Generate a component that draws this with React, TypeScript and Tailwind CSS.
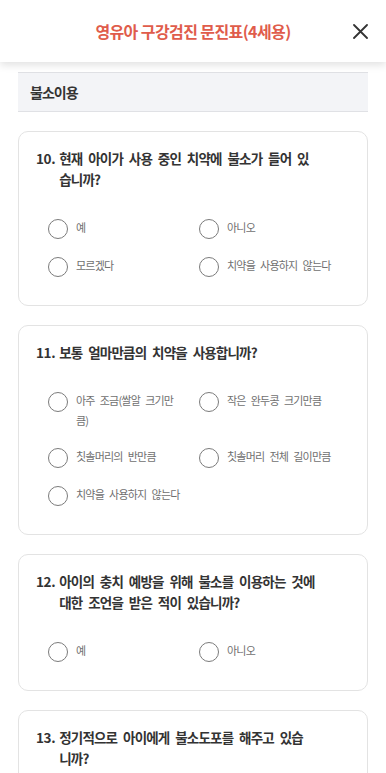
const questions = [
  {
    num: 10,
    lines: ["현재 아이가 사용 중인 치약에 불소가 들어 있", "습니까?"],
    options: [["예"], ["아니오"], ["모르겠다"], ["치약을 사용하지 않는다"]],
  },
  {
    num: 11,
    lines: ["보통 얼마만큼의 치약을 사용합니까?"],
    options: [
      ["아주 조금(쌀알 크기만", "큼)"],
      ["작은 완두콩 크기만큼"],
      ["칫솔머리의 반만큼"],
      ["칫솔머리 전체 길이만큼"],
      ["치약을 사용하지 않는다"],
    ],
  },
  {
    num: 12,
    lines: ["아이의 충치 예방을 위해 불소를 이용하는 것에", "대한 조언을 받은 적이 있습니까?"],
    options: [["예"], ["아니오"]],
  },
  {
    num: 13,
    lines: ["정기적으로 아이에게 불소도포를 해주고 있습", "니까?"],
    options: [["예"], ["아니오"]],
  },
];

function Radio({ lines }: { lines: string[] }) {
  return (
    <label className="flex items-start gap-2">
      <span className="mt-[2px] h-5 w-5 shrink-0 rounded-full border-[1.5px] border-[#7b7b7b] bg-white" />
      <span className="text-[11px] leading-5 tracking-[-0.8px] [word-spacing:3.5px] text-[#6f6f6f]">
        {lines.map((l) => (
          <span key={l} className="block whitespace-nowrap">
            {l}
          </span>
        ))}
      </span>
    </label>
  );
}

export default function App() {
  return (
    <div className="min-h-screen bg-white font-['Noto_Sans_CJK_KR',sans-serif]">
      <header className="relative z-10 grid h-[62px] grid-cols-[48px_1fr_48px] items-center bg-white shadow-[0_3px_8px_rgba(0,0,0,0.12)]">
        <div />
        <h1 className="text-center text-[16px] font-bold tracking-[-0.6px] text-[#e05c4b]">
          영유아 구강검진 문진표(4세용)
        </h1>
        <div className="flex justify-end pr-[18px]">
          <svg width="15" height="15" viewBox="0 0 15 15" fill="none" stroke="#333" strokeWidth="1.8" strokeLinecap="round">
            <path d="M1 1L14 14M14 1L1 14" />
          </svg>
        </div>
      </header>

      <main className="px-[18px] pt-[10px] pb-10">
        <div className="flex h-[40px] items-center border-y border-[#e0e1e5] bg-[#f3f4f7] px-3">
          <span className="text-[14px] font-semibold tracking-[-1px] text-[#333]">불소이용</span>
        </div>

        <div className="mt-[19px] flex flex-col gap-[19px]">
          {questions.map((q) => (
            <section key={q.num} className="rounded-[10px] border border-[#e3e3e3] bg-white px-[17px] pt-[16px] pb-[28px]">
              <div className="flex text-[13.5px] font-semibold leading-[21px] tracking-[-0.8px] [word-spacing:3.5px] text-[#333]">
                <span className="mr-[4px] shrink-0 whitespace-nowrap tracking-[-0.4px]">{q.num}.</span>
                <div>
                  {q.lines.map((l) => (
                    <div key={l} className="whitespace-nowrap">
                      {l}
                    </div>
                  ))}
                </div>
              </div>
              <div className="mt-[27px] grid grid-cols-2 gap-y-4 pl-[12px]">
                {q.options.map((o) => (
                  <Radio key={o.join("")} lines={o} />
                ))}
              </div>
            </section>
          ))}
        </div>
      </main>
    </div>
  );
}
